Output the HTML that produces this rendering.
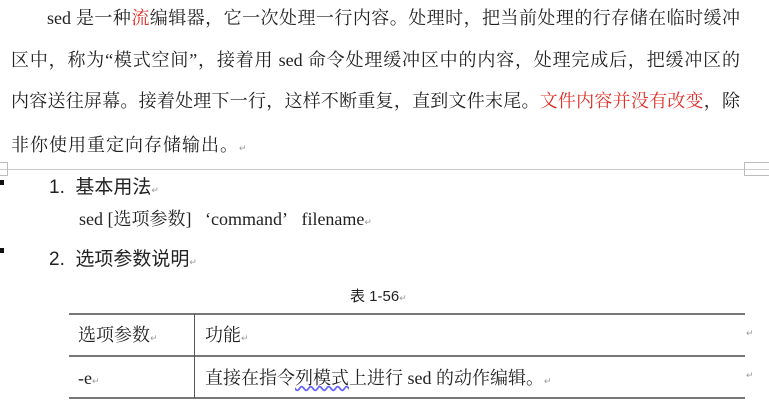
<!DOCTYPE html>
<html><head><meta charset="utf-8"><style>
body{margin:0;width:769px;height:407px;background:#fff;position:relative;overflow:hidden;font-family:"Liberation Serif","Noto Serif CJK SC",serif;color:#222}
.t{position:absolute;white-space:nowrap;font-size:18px;line-height:22px}
.j{position:absolute;white-space:nowrap;font-size:18px;line-height:22px;text-align:justify;text-align-last:justify}
.s{font-family:"Liberation Sans","Noto Sans CJK SC",sans-serif}
.r{color:#e0302a}
.m{color:#999;font-size:9px}
.h{position:absolute;background:#777}
</style></head><body>
<div class="j" style="left:47px;top:7px;width:693px">sed 是一种<span class="r">流</span>编辑器，它一次处理一行内容。处理时，把当前处理的行存储在临时缓冲</div>
<div class="j" style="left:11px;top:49px;width:729px">区中，称为“模式空间”，接着用 sed 命令处理缓冲区中的内容，处理完成后，把缓冲区的</div>
<div class="j" style="left:11px;top:90px;width:729px">内容送往屏幕。接着处理下一行，这样不断重复，直到文件末尾。<span class="r">文件内容并没有改变</span>，除</div>
<div class="t" style="left:11px;top:134px;letter-spacing:1px">非你使用重定向存储输出。<span class="m">↵</span></div>
<div style="position:absolute;left:0;top:169px;width:769px;height:1px;background:#ccc"></div>
<div style="position:absolute;left:-2px;top:162px;width:8px;height:12px;border:1px solid #bbb"></div>
<div style="position:absolute;left:744px;top:162px;width:32px;height:12px;border:1px solid #bbb;border-right:none"></div>
<div style="position:absolute;left:0;top:180px;width:4px;height:5px;background:#111"></div>
<div style="position:absolute;left:0;top:248px;width:4px;height:5px;background:#111"></div>
<div class="t s" style="left:49px;top:177px;font-size:19px">1.&nbsp; 基本用法<span class="m">↵</span></div>
<div class="t" style="left:79px;top:208px;font-size:18px">sed [选项参数]&nbsp;&nbsp; ‘command’&nbsp;&nbsp; filename<span class="m">↵</span></div>
<div class="t s" style="left:49px;top:249px;font-size:19px">2.&nbsp; 选项参数说明<span class="m">↵</span></div>
<div class="t s" style="left:350px;top:286px;font-size:15px">表 1-56<span class="m">↵</span></div>
<div class="h" style="left:69px;top:313px;width:676px;height:2px"></div>
<div class="h" style="left:69px;top:355px;width:676px;height:2px"></div>
<div class="h" style="left:69px;top:397px;width:676px;height:2px"></div>
<div class="h" style="left:194px;top:314px;width:1px;height:84px;background:#555"></div>
<div class="t" style="left:78px;top:324px">选项参数<span class="m">↵</span></div>
<div class="t" style="left:205px;top:324px">功能<span class="m">↵</span></div>
<div class="t" style="left:78px;top:367px">-e<span class="m">↵</span></div>
<div class="t" style="left:205px;top:367px">直接在指令<span style="text-decoration:underline wavy #66f">列模式</span>上进行 sed 的动作编辑。<span class="m">↵</span></div>
<div class="t m" style="left:746px;top:322px">↵</div>
<div class="t m" style="left:746px;top:364px">↵</div>
</body></html>
